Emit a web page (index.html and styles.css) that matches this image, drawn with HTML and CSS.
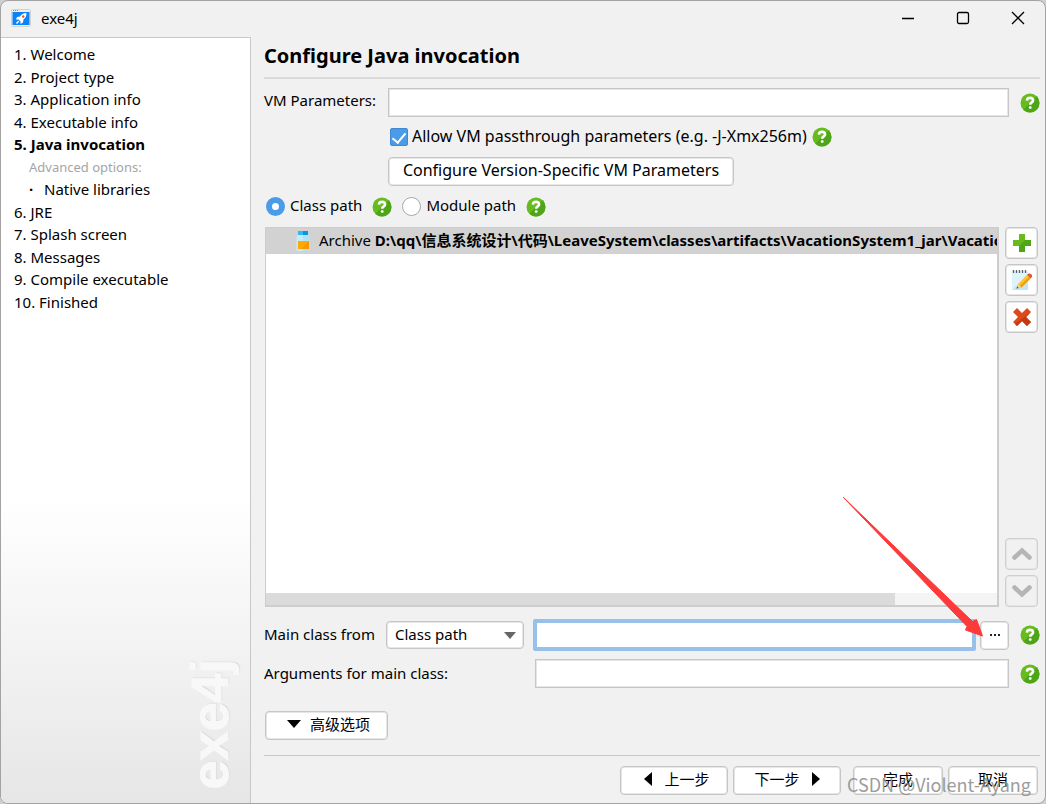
FILE: index.html
```html
<!DOCTYPE html>
<html lang="zh-CN">
<head>
<meta charset="utf-8">
<title>exe4j</title>
<link rel="stylesheet" href="styles.css">
</head>
<body>
<svg width="0" height="0" class="defs" aria-hidden="true">
  <defs>
    <clipPath id="disc"><circle cx="10" cy="10" r="9.5"/></clipPath>
    <symbol id="help" viewBox="0 0 20 20">
      <circle cx="10" cy="10" r="9.5" fill="#67bb1f"/>
      <path d="M20 0V20H0Z" fill="#4fa518" clip-path="url(#disc)"/>
      <path d="M6.900 7.600C7 5.700 8.200 4.900 10 4.900C11.900 4.900 13.100 5.900 13.100 7.400C13.100 9.400 10.200 9.300 10.200 11.700" fill="none" stroke="#fff" stroke-width="2.600"/>
      <rect x="8.800" y="13.200" width="2.800" height="2.600" rx="1" fill="#fff"/>
    </symbol>
  </defs>
</svg>
<div class="window">
  <header class="titlebar">
    <svg class="app-icon" viewBox="0 0 20 18" aria-hidden="true">
      <rect x=".5" y=".5" width="19" height="17" rx="1" fill="#eee" stroke="#d2d2d2"/>
      <path d="M2 1.500h1M4 1.500h1M6 1.500h1" stroke="#e76a4d"/>
      <rect x="1.500" y="3" width="17" height="13" fill="#0a84f5"/>
      <path d="M15.500 4C12 4 10.500 5.500 9 7.500L6 8L5 10.500L7.500 10.500L9.500 12.500L9.500 15L12 13.500L12.500 10.500C14.500 9 15.500 7.500 15.500 4Z" fill="#fff"/>
      <circle cx="12.200" cy="7.500" r="1.200" fill="#e05a30"/>
      <path d="M7.800 12L5.500 14.500" stroke="#fff" stroke-width="1.500"/>
    </svg>
    <span class="app-name">exe4j</span>
    <button class="win-btn" aria-label="Minimize"><svg viewBox="0 0 14 14"><path d="M1 7.500H13"/></svg></button>
    <button class="win-btn" aria-label="Maximize"><svg viewBox="0 0 14 14"><rect x="1.500" y="1.500" width="11" height="11" rx="1.500"/></svg></button>
    <button class="win-btn" aria-label="Close"><svg viewBox="0 0 14 14"><path d="M1 1L13 13M13 1L1 13"/></svg></button>
  </header>
  <div class="body">
    <nav class="sidebar">
      <ul class="steps">
        <li>1. Welcome</li>
        <li>2. Project type</li>
        <li>3. Application info</li>
        <li>4. Executable info</li>
        <li class="current">5. Java invocation</li>
        <li class="sub-title">Advanced options:</li>
        <li class="sub-item">Native libraries</li>
        <li>6. JRE</li>
        <li>7. Splash screen</li>
        <li>8. Messages</li>
        <li>9. Compile executable</li>
        <li>10. Finished</li>
      </ul>
      <div class="brand">exe4j</div>
    </nav>
    <main class="main">
      <h1 class="heading">Configure Java invocation</h1>
      <div class="row vm-row">
        <label class="vm-label" for="vm">VM Parameters:</label>
        <input class="field" id="vm" type="text">
        <button class="help" aria-label="Help"><svg><use href="#help"/></svg></button>
      </div>
      <div class="vm-options">
        <div class="row check-row">
          <input class="check" id="pass" type="checkbox" checked>
          <label for="pass">Allow VM passthrough parameters (e.g. -J-Xmx256m)</label>
          <button class="help" aria-label="Help"><svg><use href="#help"/></svg></button>
        </div>
        <button class="btn version-btn">Configure Version-Specific VM Parameters</button>
      </div>
      <div class="row radio-row">
        <input class="radio" id="cp" type="radio" name="path" checked>
        <label for="cp">Class path</label>
        <button class="help" aria-label="Help"><svg><use href="#help"/></svg></button>
        <input class="radio" id="mp" type="radio" name="path">
        <label for="mp">Module path</label>
        <button class="help" aria-label="Help"><svg><use href="#help"/></svg></button>
      </div>
      <div class="list-area">
        <div class="list">
          <div class="entry">
            <svg class="jar" viewBox="0 0 14 20" aria-hidden="true">
              <rect x="2" width="5" height="4" fill="#35b9f3"/><rect x="7" width="5" height="4" fill="#0b96e0"/>
              <path d="M2 4H12L13.500 6V20H.5V6Z" fill="#c5ebfa"/><path d="M7 4H12L13.500 6V20H7Z" fill="#b0e2f6"/>
              <rect x="2" y="10" width="11" height="8" fill="#ffa800"/>
              <path d="M13 10V18H5Z" fill="#fb9500"/>
            </svg>
            <span class="entry-text">Archive <b>D:\qq\信息系统设计\代码\LeaveSystem\classes\artifacts\VacationSystem1_jar\VacationSystem1.jar</b></span>
          </div>
          <div class="scroll"><div class="thumb"></div></div>
        </div>
        <div class="tools">
          <button class="tool" aria-label="Add"><svg viewBox="0 0 20 20"><path d="M7 1H13V7H19V13H13V19H7V13H1V7H7Z" fill="#67bb1f"/><path d="M13 7H19V13H13V19H7V13Z" fill="#4fa518"/></svg></button>
          <button class="tool" aria-label="Edit"><svg viewBox="0 0 20 20"><rect y="1" width="16" height="19" fill="#dff3fc"/><path d="M16 4V20H0Z" fill="#bfe7fa"/><path d="M1.500 0V3M4.500 0V3M7.500 0V3M10.500 0V3M13.500 0V3" stroke="#56646c" stroke-width="1.300"/><path d="M4.500 18.500L6 14L15 5L18.500 8.500L9.500 17.500Z" fill="#ffc529"/><path d="M9.500 17.500L18.500 8.500L17 7L7.500 16Z" fill="#f29b16"/><path d="M4.500 18.500L6 14L9.500 17.500Z" fill="#efd2a0"/><path d="M4.500 18.500L5.200 16.500L6.700 18Z" fill="#444"/><path d="M15 5L16.500 3.500Q18 3 19.500 4.500T19.700 7.300L18.500 8.500Z" fill="#e9552e"/></svg></button>
          <button class="tool" aria-label="Remove"><svg viewBox="0 0 20 20"><path d="M1 5L5 1L10 6L15 1L19 5L14 10L19 15L15 19L10 14L5 19L1 15L6 10Z" fill="#dc4a1c"/><path d="M19 5L14 10L19 15L15 19L10 14L5 19L3 17Z" fill="#c43a0e"/></svg></button>
          <button class="tool move-up" disabled aria-label="Move up"><svg viewBox="0 0 20 20"><path d="M2.500 13.500L10 6.500L17.500 13.500" fill="none" stroke="#b5b5b5" stroke-width="4.500" stroke-linecap="round"/></svg></button>
          <button class="tool" disabled aria-label="Move down"><svg viewBox="0 0 20 20"><path d="M2.500 6.500L10 13.500L17.500 6.500" fill="none" stroke="#b5b5b5" stroke-width="4.500" stroke-linecap="round"/></svg></button>
        </div>
      </div>
      <div class="form">
        <div class="row from">
          <label for="from">Main class from</label>
          <span class="select-box">
            <select class="select" id="from"><option>Class path</option><option>Module path</option></select>
            <svg class="caret" viewBox="0 0 12 7" aria-hidden="true"><path d="M0 0H12L6 7Z" fill="#666"/></svg>
          </span>
        </div>
        <div class="row class-name">
          <input class="field focused" type="text" aria-label="Main class">
          <button class="btn more" aria-label="Browse"><svg viewBox="0 0 10 2"><path d="M0 0h2v2H0zM4 0h2v2H4zM8 0h2v2H8z" fill="#222"/></svg></button>
        </div>
        <button class="help" aria-label="Help"><svg><use href="#help"/></svg></button>
        <label class="args-label" for="args">Arguments for main class:</label>
        <input class="field" id="args" type="text">
        <button class="help" aria-label="Help"><svg><use href="#help"/></svg></button>
      </div>
      <button class="btn advanced"><svg class="down" viewBox="0 0 14 8" aria-hidden="true"><path d="M0 0H14L7 8Z"/></svg>高级选项</button>
      <footer class="footer">
        <button class="btn nav back"><svg class="side" viewBox="0 0 8 14" aria-hidden="true"><path d="M8 0V14L0 7Z"/></svg>上一步</button>
        <button class="btn nav">下一步<svg class="side" viewBox="0 0 8 14" aria-hidden="true"><path d="M0 0V14L8 7Z"/></svg></button>
        <button class="btn end finish">完成</button>
        <button class="btn end">取消</button>
      </footer>
    </main>
  </div>
  <svg class="arrow" viewBox="0 0 140 140" aria-hidden="true"><path d="M0 0L129.500 124.500L133.500 122.500L139.500 139L122.500 133L124 129.500Z" fill="#fd3a3a" stroke="#fd3a3a"/></svg>
  <div class="watermark">CSDN @Violent-Ayang</div>
</div>
</body>
</html>
```
FILE: styles.css
```css
* { box-sizing: border-box; }
body {
  margin: 0;
  background: #cfcfcf;
  color: #000;
  font: 15px/22px "Noto Sans", "Noto Sans CJK SC", sans-serif;
}
button, input, select { font: inherit; color: inherit; margin: 0; }
button { padding: 0; }
.defs { position: absolute; }
.window {
  position: relative;
  display: flex;
  flex-direction: column;
  height: 100vh;
  overflow: hidden;
  background: #f1f1f1;
  border: 1px solid #a3a3a3;
  border-radius: 8px;
}
.titlebar { display: flex; align-items: center; height: 36px; padding: 0 0 2px 10px; }
.app-icon { width: 20px; height: 18px; }
.app-name { flex: 1; margin-left: 10px; }
.win-btn { width: 55px; height: 34px; border: 0; background: none; }
.win-btn svg { display: block; width: 14px; height: 14px; margin: auto; fill: none; stroke: #000; stroke-width: 1.3; }
.body { flex: 1; display: flex; min-height: 0; }
.sidebar {
  flex: none;
  display: flex;
  flex-direction: column;
  justify-content: space-between;
  width: 250px;
  border: solid #c8c8c8;
  border-width: 1px 1px 0 0;
  background: linear-gradient(#fff 60%, #e6e6e6);
}
.steps { margin: 0; padding: 5px 13px; list-style: none; }
.steps li:nth-child(odd) { padding-bottom: 1px; }
.steps .current { font-weight: bold; }
.steps .sub-title { padding-left: 15px; color: #a5a5a5; font-size: 13px; }
.steps .sub-item { padding-left: 15px; }
.sub-item::before { content: "·"; display: inline-block; width: 15px; font-weight: bold; }
.brand {
  align-self: flex-end;
  margin: 0 12px 14px 0;
  writing-mode: vertical-rl;
  rotate: 180deg;
  font: bold 52px/56px "Liberation Sans", sans-serif;
  color: #f8f8f8;
  -webkit-text-stroke: 1px #f8f8f8;
  text-shadow: 1px 1px 1px #d4d4d4;
}
.main { flex: 1; display: flex; flex-direction: column; min-width: 0; padding: 0 5px 8px 13px; }
.heading {
  margin: 0 0 9px;
  padding: 5px 0 7px;
  border-bottom: 2px solid #dadada;
  font-size: 20px;
  line-height: 28px;
}
.row { display: flex; align-items: center; }
.field {
  flex: 1;
  min-width: 0;
  height: 29px;
  padding: 0 6px;
  border: 1px solid #c6c6c6;
  background: #fff;
  box-shadow: inset 0 0 0 1px #e6e6e6;
  outline: none;
}
.focused { height: 32px; border: 4px solid #97c1ea; border-radius: 2px; box-shadow: none; }
.help { flex: none; width: 20px; height: 20px; border: 0; background: none; }
.help svg { display: block; width: 20px; height: 20px; }
.vm-label { width: 124px; padding-bottom: 5px; }
.vm-row .help { margin-left: 11px; }
.vm-options { padding-left: 124px; }
.check-row { height: 40px; }
.check-row label { padding-bottom: 3px; font-size: 16px; }
.check-row .help { margin-left: 5px; }
.check {
  appearance: none;
  width: 18px;
  height: 18px;
  margin: 0 4px 0 2px;
  border: 1px solid #4088d0;
  border-radius: 2px;
  background: #4a9be8;
}
.check::after {
  content: "";
  display: block;
  width: 6px;
  height: 11px;
  margin: 1px auto;
  border: solid #fff;
  border-width: 0 2px 2px 0;
  rotate: 40deg;
}
.btn {
  display: flex;
  align-items: center;
  justify-content: center;
  height: 29px;
  padding-bottom: 3px;
  border: 1px solid #c6c6c6;
  border-radius: 4px;
  background: #fff;
  box-shadow: inset 0 0 0 1px #e6e6e6;
}
.version-btn { width: 346px; font-size: 16px; }
.radio-row { height: 41px; padding-left: 2px; }
.radio-row label { padding-bottom: 3px; }
.radio-row .help { margin: 0 10px; }
.radio {
  appearance: none;
  width: 19px;
  height: 19px;
  margin: 0 5px 0 0;
  border: 1px solid #a8a8a8;
  border-radius: 50%;
  background: #fff;
}
.radio:checked { border: 6px solid #4a9be8; }
.list-area { flex: 1; display: flex; gap: 6px; min-height: 0; padding-left: 1px; }
.list {
  flex: 1;
  display: flex;
  flex-direction: column;
  justify-content: space-between;
  min-width: 0;
  border: 2px solid #cdcdcd;
  border-width: 1px 2px 2px 1px;
  background: #fff;
}
.entry {
  display: flex;
  align-items: center;
  gap: 9px;
  height: 26px;
  padding-left: 30px;
  overflow: hidden;
  background: #d2d2d2;
  white-space: nowrap;
}
.entry-text { padding-bottom: 2px; }
.jar { flex: none; width: 14px; height: 20px; }
.scroll { height: 12px; background: #f4f4f4; }
.thumb { width: 86%; height: 100%; background: #dbdbdb; }
.tools { display: flex; flex-direction: column; gap: 5px; padding-right: 2px; }
.tool {
  width: 33px;
  height: 32px;
  border: 1px solid #c6c6c6;
  border-radius: 4px;
  background: #fff;
  box-shadow: inset 0 0 0 1px #e6e6e6;
}
.tool svg { display: block; width: 20px; height: 20px; margin: auto; }
.tool:disabled { background: #f1f1f1; border-color: #cfcfcf; }
.move-up { margin-top: auto; }
.form {
  display: grid;
  grid-template-columns: 260px 1fr 20px;
  align-items: center;
  column-gap: 11px;
  row-gap: 8px;
  margin: 12px 0 23px;
}
.from { justify-content: space-between; }
.from label, .args-label { padding-bottom: 2px; }
.select-box { position: relative; width: 138px; }
.select {
  appearance: none;
  display: block;
  width: 100%;
  height: 28px;
  padding: 0 8px 2px 8px;
  border: 1px solid #c6c6c6;
  border-radius: 4px;
  background: #fff;
  box-shadow: inset 0 0 0 1px #e6e6e6;
}
.caret { position: absolute; right: 8px; top: 11px; width: 12px; height: 7px; pointer-events: none; }
.class-name { gap: 4px; margin-left: -2px; }
.more { width: 29px; padding: 0; }
.more svg { width: 10px; height: 2px; }
.advanced { width: 123px; margin: 0 0 15px 1px; padding-left: 4px; gap: 9px; }
.down { width: 14px; height: 8px; }
.side { width: 8px; height: 14px; }
.footer {
  display: flex;
  justify-content: flex-end;
  gap: 5px;
  padding: 10px 2px 0 0;
  border-top: 1px solid #c8c8c8;
}
.nav { width: 108px; gap: 12px; }
.back { padding-left: 6px; }
.end { width: 90px; }
.finish { margin-left: 7px; }
.arrow { position: absolute; right: 62px; bottom: 166px; width: 140px; height: 140px; pointer-events: none; }
.watermark {
  position: absolute;
  right: 14px;
  bottom: 7px;
  color: #8c8c8c;
  font: 18px/24px "Noto Sans CJK SC", sans-serif;
  opacity: .85;
  pointer-events: none;
}
```
